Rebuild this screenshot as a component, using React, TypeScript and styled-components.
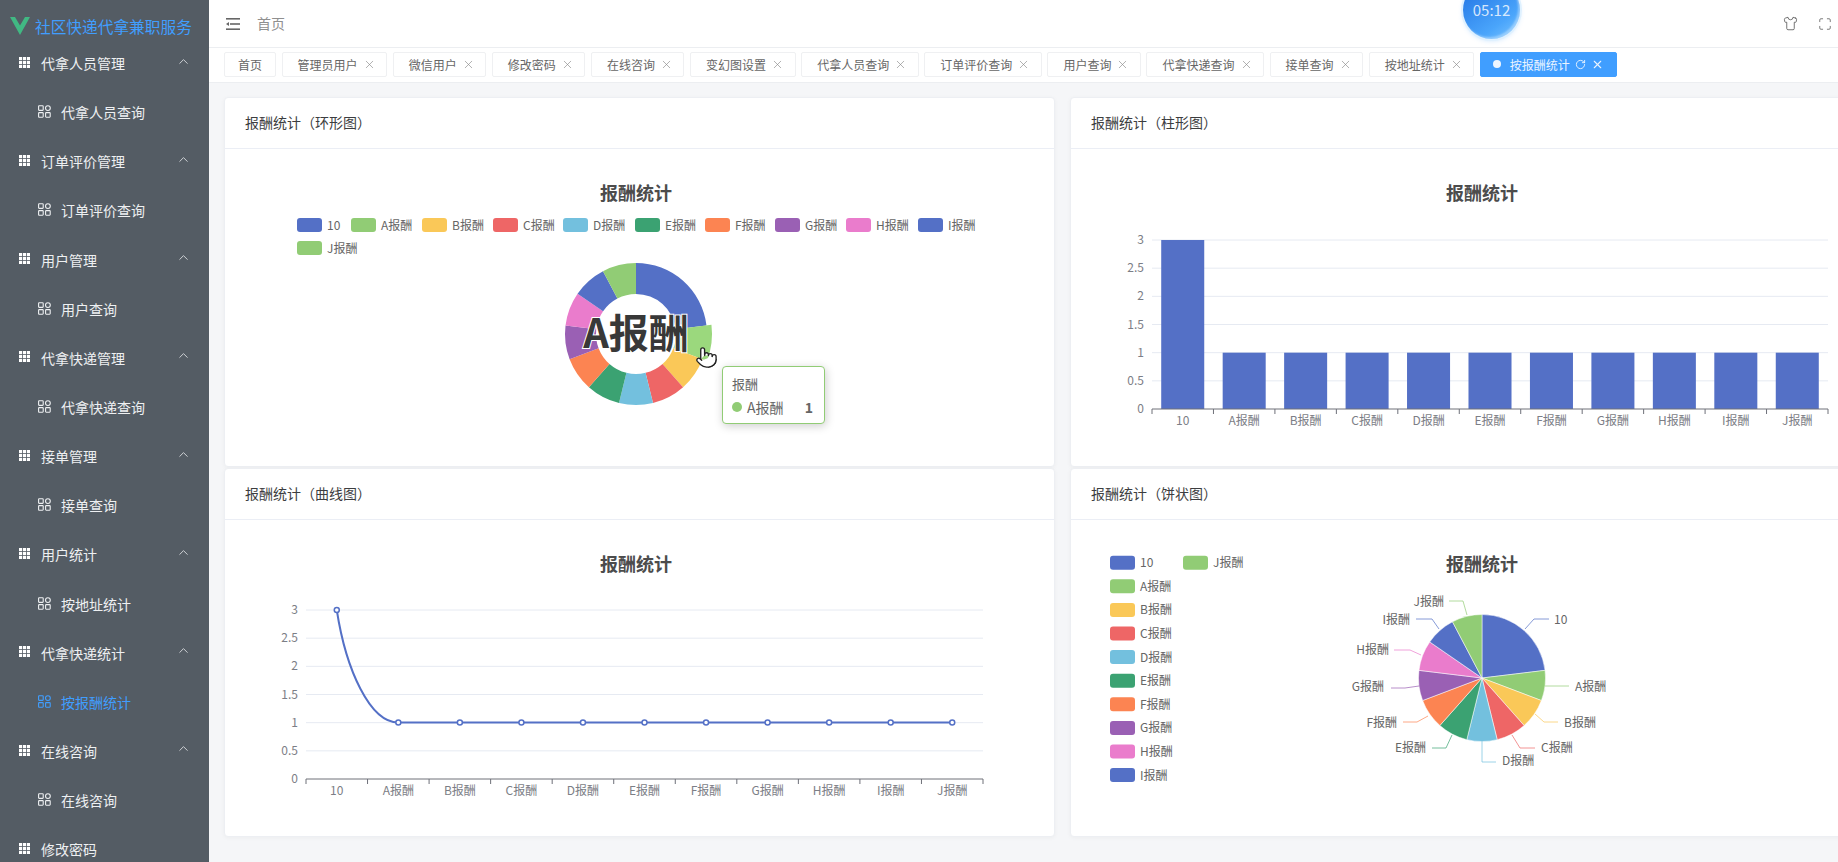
import React from "react";
import styled, { createGlobalStyle } from "styled-components";
import { ChevronUp, Maximize, Pointer, RotateCw, Shirt, X } from "lucide-react";

const COLORS = ["#5470c6", "#91cc75", "#fac858", "#ee6666", "#73c0de", "#3ba272", "#fc8452", "#9a60b4", "#ea7ccc", "#5470c6", "#91cc75"];
const NAMES = ["10", "A报酬", "B报酬", "C报酬", "D报酬", "E报酬", "F报酬", "G报酬", "H报酬", "I报酬", "J报酬"];
const VALUES = [3, 1, 1, 1, 1, 1, 1, 1, 1, 1, 1];
const TOTAL = VALUES.reduce((sum, v) => sum + v, 0);

const MENU = [
  { title: "代拿人员管理", child: "代拿人员查询" },
  { title: "订单评价管理", child: "订单评价查询" },
  { title: "用户管理", child: "用户查询" },
  { title: "代拿快递管理", child: "代拿快递查询" },
  { title: "接单管理", child: "接单查询" },
  { title: "用户统计", child: "按地址统计" },
  { title: "代拿快递统计", child: "按报酬统计", active: true },
  { title: "在线咨询", child: "在线咨询" },
  { title: "修改密码" },
];

const TAGS = ["管理员用户", "微信用户", "修改密码", "在线咨询", "变幻图设置", "代拿人员查询", "订单评价查询", "用户查询", "代拿快递查询", "接单查询", "按地址统计"];

// legend positions of the donut chart, the last one wraps to a second row
const DONUT_LEGEND = [297, 351, 422, 493, 563, 635, 705, 775, 846, 918, 297];

const PIE_LABELS = [
  { x: 1554, y: 619, anchor: "start", line: "1525,629 1534,619 1549,619" },
  { x: 1575, y: 686, anchor: "start", line: "1545,686 1556,686 1569,686" },
  { x: 1564, y: 722, anchor: "start", line: "1535,714 1544,722 1558,722" },
  { x: 1541, y: 747, anchor: "start", line: "1512,735 1520,748 1535,748" },
  { x: 1502, y: 760, anchor: "start", line: "1482,741 1482,762 1496,762" },
  { x: 1426, y: 747, anchor: "end", line: "1452,735 1446,748 1432,748" },
  { x: 1397, y: 722, anchor: "end", line: "1428,716 1417,722 1403,722" },
  { x: 1384, y: 686, anchor: "end", line: "1419,686 1405,688 1391,688" },
  { x: 1389, y: 649, anchor: "end", line: "1421,655 1410,650 1394,650" },
  { x: 1410, y: 619, anchor: "end", line: "1439,629 1432,619 1416,619" },
  { x: 1444, y: 601, anchor: "end", line: "1467,615 1463,601 1449,601" },
];

const polar = (cx: number, cy: number, r: number, deg: number) => {
  const rad = ((deg - 90) * Math.PI) / 180;
  return `${(cx + r * Math.cos(rad)).toFixed(2)} ${(cy + r * Math.sin(rad)).toFixed(2)}`;
};

const slicePath = (cx: number, cy: number, inner: number, outer: number, from: number, to: number) => {
  const large = to - from > 180 ? 1 : 0;
  const head = `M${polar(cx, cy, outer, from)} A${outer} ${outer} 0 ${large} 1 ${polar(cx, cy, outer, to)}`;
  if (inner === 0) return `${head} L${cx} ${cy} Z`;
  return `${head} L${polar(cx, cy, inner, to)} A${inner} ${inner} 0 ${large} 0 ${polar(cx, cy, inner, from)} Z`;
};

const sliceAngles = () => {
  let start = 0;
  return VALUES.map((v) => {
    const from = start;
    start += (v / TOTAL) * 360;
    return [from, start];
  });
};

const GridIcon = () => (
  <MenuGlyph width="11" height="11" viewBox="0 0 11 11" fill="#fff">
    {[0, 4, 8].map((y) =>
      [0, 4, 8].map((x) => <rect key={`${x}-${y}`} x={x} y={y} width="3.2" height="3.2" />)
    )}
  </MenuGlyph>
);

const AppsIcon = () => (
  <SubGlyph width="13" height="13" viewBox="0 0 13 13" fill="none" stroke="currentColor" strokeWidth="1.1">
    <rect x="0.6" y="0.8" width="4.6" height="4.6" rx="0.6" />
    <rect x="0.6" y="7.6" width="4.6" height="4.6" rx="0.6" />
    <rect x="7.6" y="7.6" width="4.6" height="4.6" rx="0.6" />
    <circle cx="9.9" cy="3.1" r="2.4" />
  </SubGlyph>
);

const FoldIcon = () => (
  <svg width="14" height="12" viewBox="0 0 14 12" fill="#666">
    <rect x="0" y="0" width="14" height="1.6" />
    <rect x="4" y="5.2" width="10" height="1.6" />
    <polygon points="0,6 3,4 3,8" />
    <rect x="0" y="10.4" width="14" height="1.6" />
  </svg>
);

const ChartHeading = ({ x, y }: { x: number; y: number }) => (
  <ChartTitle x={x} y={y} textAnchor="middle" dominantBaseline="central">
    报酬统计
  </ChartTitle>
);

const LegendItem = ({ x, y, index }: { x: number; y: number; index: number }) => (
  <g>
    <rect x={x} y={y - 7} width="25" height="14" rx="3" fill={COLORS[index]} />
    <LegendText x={x + 30} y={y} dominantBaseline="central">
      {NAMES[index]}
    </LegendText>
  </g>
);

const YAxisGrid = ({ left, right, labelX, top }: { left: number; right: number; labelX: number; top: number }) => (
  <g>
    {["3", "2.5", "2", "1.5", "1", "0.5", "0"].map((label, i) => {
      const y = top + i * 28.17;
      return (
        <g key={label}>
          {label !== "0" && <line x1={left} x2={right} y1={y} y2={y} stroke="#e6eaf2" />}
          <AxisText x={labelX} y={y} textAnchor="end" dominantBaseline="central">
            {label}
          </AxisText>
        </g>
      );
    })}
  </g>
);

const XAxis = ({ left, right, y }: { left: number; right: number; y: number }) => {
  const band = (right - left) / NAMES.length;
  return (
    <g>
      <line x1={left} x2={right} y1={y} y2={y} stroke="#6e7079" />
      {[...NAMES, ""].map((name, i) => (
        <g key={i}>
          <line x1={left + i * band} x2={left + i * band} y1={y} y2={y + 5} stroke="#6e7079" />
          {name && (
            <AxisText x={left + (i + 0.5) * band} y={y + 12} textAnchor="middle" dominantBaseline="central">
              {name}
            </AxisText>
          )}
        </g>
      ))}
    </g>
  );
};

const DonutChart = () => (
  <ChartSvg width="830" height="318" viewBox="224 149 830 318">
    <ChartHeading x={636} y={193} />
    {NAMES.map((_, i) => (
      <LegendItem key={i} x={DONUT_LEGEND[i]} y={i === 10 ? 248 : 225} index={i} />
    ))}
    {sliceAngles().map(([from, to], i) => (
      <path key={i} d={slicePath(636, 334, 40, i === 1 ? 76 : 71, from, to)} fill={i === 1 ? "#9bd87d" : COLORS[i]} />
    ))}
    <DonutLabel x={636} y={331} textAnchor="middle" dominantBaseline="central">
      A报酬
    </DonutLabel>
  </ChartSvg>
);

const BarChart = () => {
  const left = 1152;
  const band = (1828 - left) / NAMES.length;
  return (
    <ChartSvg width="830" height="318" viewBox="1070 149 830 318">
      <ChartHeading x={1482} y={193} />
      <YAxisGrid left={left} right={1828} labelX={1144} top={240} />
      {VALUES.map((v, i) => (
        <rect
          key={i}
          x={left + i * band + band * 0.15}
          y={409 - v * 56.33}
          width={band * 0.7}
          height={v * 56.33}
          fill={COLORS[0]}
        />
      ))}
      <XAxis left={left} right={1828} y={409} />
    </ChartSvg>
  );
};

const LineChart = () => {
  const left = 306;
  const band = (983 - left) / NAMES.length;
  const baseY = 722.6;
  const pointX = (i: number) => left + (i + 0.5) * band;
  return (
    <ChartSvg width="830" height="318" viewBox="224 520 830 318">
      <ChartHeading x={636} y={564} />
      <YAxisGrid left={left} right={983} labelX={298} top={610} />
      <XAxis left={left} right={983} y={779} />
      <path
        d={`M${pointX(0)} 610 C346 670 370 ${baseY} ${pointX(1)} ${baseY} L${pointX(10)} ${baseY}`}
        fill="none"
        stroke={COLORS[0]}
        strokeWidth="2"
      />
      {VALUES.map((v, i) => (
        <circle
          key={i}
          cx={pointX(i)}
          cy={v === 3 ? 610 : baseY}
          r="2.5"
          fill="#fff"
          stroke={COLORS[0]}
          strokeWidth="1.5"
        />
      ))}
    </ChartSvg>
  );
};

const PieChart = () => (
  <ChartSvg width="830" height="318" viewBox="1070 520 830 318">
    <ChartHeading x={1482} y={564} />
    {NAMES.slice(0, 10).map((_, i) => (
      <LegendItem key={i} x={1110} y={562.7 + i * 23.6} index={i} />
    ))}
    <LegendItem x={1183} y={562.7} index={10} />
    {sliceAngles().map(([from, to], i) => (
      <path key={i} d={slicePath(1482, 678, 0, 63.5, from, to)} fill={COLORS[i]} stroke="#fff" strokeWidth="0.5" />
    ))}
    {PIE_LABELS.map((label, i) => (
      <g key={i}>
        <polyline points={label.line} fill="none" stroke={COLORS[i]} strokeWidth="1" opacity="0.7" />
        <LegendText x={label.x} y={label.y} textAnchor={label.anchor as "start" | "end"} dominantBaseline="central">
          {NAMES[i]}
        </LegendText>
      </g>
    ))}
  </ChartSvg>
);

export default function App() {
  return (
    <Layout>
      <GlobalStyle />
      <Sidebar>
        <Logo>
          <svg width="20" height="18" viewBox="0 0 20 18">
            <polygon points="0,0 5,0 10,8.5 15,0 20,0 10,18" fill="#41b883" />
          </svg>
          <LogoText>社区快递代拿兼职服务</LogoText>
        </Logo>
        {MENU.map((item) => (
          <React.Fragment key={item.title}>
            <MenuRow>
              <GridIcon />
              <MenuLabel>{item.title}</MenuLabel>
              {item.child && (
                <Chevron>
                  <ChevronUp size={15} strokeWidth={1.5} />
                </Chevron>
              )}
            </MenuRow>
            {item.child && (
              <SubRow $active={item.active}>
                <AppsIcon />
                <SubLabel>{item.child}</SubLabel>
              </SubRow>
            )}
          </React.Fragment>
        ))}
      </Sidebar>
      <Main>
        <TopBar>
          <FoldIcon />
          <Crumb>首页</Crumb>
          <TopIcons>
            <Shirt size={15} strokeWidth={1.3} />
            <Maximize size={14} strokeWidth={1.3} />
          </TopIcons>
          <Timer>05:12</Timer>
        </TopBar>
        <TagBar>
          <Tag>首页</Tag>
          {TAGS.map((tag) => (
            <Tag key={tag} $closable>
              {tag}
              <X size={13} strokeWidth={1.2} />
            </Tag>
          ))}
          <ActiveTag>
            <TagDot />
            按报酬统计
            <RotateCw size={11} strokeWidth={2} />
            <X size={13} strokeWidth={2} />
          </ActiveTag>
        </TagBar>
        <Content>
          <Card>
            <CardHeader>报酬统计（环形图）</CardHeader>
            <DonutChart />
            <Tooltip>
              <TooltipTitle>报酬</TooltipTitle>
              <TooltipRow>
                <TooltipDot />
                A报酬
                <TooltipValue>1</TooltipValue>
              </TooltipRow>
            </Tooltip>
            <HandCursor>
              <Pointer size={23} strokeWidth={1.4} fill="#fff" color="#222" />
            </HandCursor>
          </Card>
          <Card>
            <CardHeader>报酬统计（柱形图）</CardHeader>
            <BarChart />
          </Card>
          <Card>
            <CardHeader>报酬统计（曲线图）</CardHeader>
            <LineChart />
          </Card>
          <Card>
            <CardHeader>报酬统计（饼状图）</CardHeader>
            <PieChart />
          </Card>
        </Content>
      </Main>
    </Layout>
  );
}

const GlobalStyle = createGlobalStyle`
  html, body {
    margin: 0;
    height: 100%;
    overflow: hidden;
  }
  * {
    box-sizing: border-box;
  }
  body {
    font-family: "Noto Sans CJK SC", "Liberation Sans", sans-serif;
  }
`;

const Layout = styled.div`
  display: flex;
  width: 1838px;
  height: 862px;
  overflow: hidden;
  background-color: #f5f6f8;
`;

const Sidebar = styled.aside`
  flex: 0 0 209px;
  height: 862px;
  overflow: hidden;
  background-color: #545c64;
  color: #eef0f2;
  font-size: 14px;
`;

const Logo = styled.div`
  display: flex;
  align-items: center;
  gap: 5px;
  height: 38.5px;
  padding: 14px 0 0 10px;
`;

const LogoText = styled.span`
  font-size: 15.7px;
  color: #409eff;
  white-space: nowrap;
`;

const MenuRow = styled.div`
  position: relative;
  display: flex;
  align-items: center;
  height: 49.15px;
  padding-left: 19px;
`;

const SubRow = styled.div<{ $active?: boolean }>`
  display: flex;
  align-items: center;
  height: 49.15px;
  padding-left: 38px;
  color: ${(props) => (props.$active ? "#409eff" : "#eef0f2")};
`;

const MenuGlyph = styled.svg`
  flex: none;
  margin-top: -2px;
`;

const SubGlyph = styled.svg`
  flex: none;
  margin-top: -1px;
`;

const MenuLabel = styled.span`
  margin-left: 11px;
  line-height: 20px;
  white-space: nowrap;
`;

const SubLabel = styled(MenuLabel)`
  margin-left: 10px;
`;

const Chevron = styled.span`
  position: absolute;
  right: 18px;
  top: 15px;
  display: flex;
  color: #d5d8db;
`;

const Main = styled.main`
  flex: 1;
  min-width: 0;
  display: flex;
  flex-direction: column;
`;

const TopBar = styled.header`
  position: relative;
  display: flex;
  align-items: center;
  flex: 0 0 48px;
  padding: 0 6px 0 17px;
  background-color: #fff;
  border-bottom: 1px solid #eceef1;
`;

const Crumb = styled.span`
  margin: -2px 0 0 17px;
  font-size: 14px;
  color: #8f8f8f;
`;

const TopIcons = styled.div`
  display: flex;
  align-items: center;
  gap: 20px;
  margin-left: auto;
  color: #555;
`;

const Timer = styled.div`
  position: absolute;
  left: 1254px;
  top: -19px;
  display: flex;
  align-items: flex-end;
  justify-content: center;
  width: 57px;
  height: 58px;
  padding-bottom: 21px;
  border-radius: 50%;
  background: linear-gradient(145deg, #2b7fe9 20%, #4aa5fb 70%, #7cc6ff 100%);
  box-shadow: 0 0 0 2px #dff1ff, 0 2px 5px rgba(64, 158, 255, 0.25), inset -2px -2px 2px rgba(255, 255, 255, 0.35);
  font-size: 15px;
  line-height: 16px;
  color: rgba(255, 255, 255, 0.8);
`;

const TagBar = styled.nav`
  display: flex;
  align-items: center;
  flex: 0 0 34.5px;
  gap: 5.6px;
  padding-left: 15px;
  background-color: #fff;
  border-bottom: 1px solid #eceef1;
`;

const Tag = styled.div<{ $closable?: boolean }>`
  display: flex;
  align-items: center;
  gap: 5px;
  height: 25px;
  padding: ${(props) => (props.$closable ? "0 10.5px 1.5px 15px" : "0 13px 1.5px")};
  background-color: #fff;
  border: 1px solid #eff0f2;
  border-radius: 2px;
  font-size: 12px;
  color: #666;
  white-space: nowrap;

  svg {
    color: #888;
  }
`;

const ActiveTag = styled(Tag)`
  padding: 0 12px 1.5px 12px;
  background-color: #409eff;
  border-color: #409eff;
  color: #eaf4ff;

  svg {
    color: #eaf4ff;
  }
`;

const TagDot = styled.span`
  width: 8px;
  height: 8px;
  margin-right: 4px;
  border-radius: 50%;
  background-color: #eef6ff;
`;

const Content = styled.section`
  display: grid;
  grid-template-columns: 831px 829px;
  grid-template-rows: 369.5px 368.5px;
  gap: 1.5px 15px;
  padding: 14.5px 0 0 15px;
`;

const Card = styled.article`
  position: relative;
  background-color: #fff;
  border: 1px solid #edeff3;
  border-radius: 4px;
  box-shadow: 0 1px 4px rgba(0, 0, 0, 0.04);
`;

const CardHeader = styled.div`
  display: flex;
  align-items: center;
  height: 51px;
  padding: 0 0 2px 20px;
  border-bottom: 1px solid #ebeef5;
  font-size: 14px;
  color: #3c3d40;
`;

const ChartSvg = styled.svg`
  display: block;
  margin-left: -1px;
`;

const ChartTitle = styled.text`
  font-size: 18px;
  font-weight: 700;
  fill: #4c4c4c;
  transform: translateY(-1px);
`;

const LegendText = styled.text`
  font-size: 12px;
  fill: #666;
  transform: translateY(-1px);
`;

const AxisText = styled.text`
  font-size: 12px;
  fill: #7c7e86;
  transform: translateY(-1.5px);
`;

const DonutLabel = styled.text`
  font-size: 40px;
  font-weight: 700;
  fill: #383838;
  stroke: #fff;
  stroke-width: 2px;
  paint-order: stroke;
`;

const Tooltip = styled.div`
  position: absolute;
  left: 497px;
  top: 268px;
  width: 103px;
  height: 58px;
  padding: 7px 9px;
  background-color: #fff;
  border: 1px solid #91cc75;
  border-radius: 4px;
  box-shadow: 1px 2px 10px rgba(0, 0, 0, 0.2);
  font-size: 14px;
  line-height: 20px;
  color: #666;
`;

const TooltipTitle = styled.div`
  margin-bottom: 3px;
  font-size: 13px;
`;

const TooltipRow = styled.div`
  display: flex;
  align-items: center;
  gap: 5px;
`;

const TooltipDot = styled.span`
  width: 10px;
  height: 10px;
  border-radius: 50%;
  background-color: #91cc75;
`;

const TooltipValue = styled.span`
  margin: 0 2px 0 auto;
  font-size: 14px;
  font-weight: 700;
`;

const HandCursor = styled.div`
  position: absolute;
  left: 470px;
  top: 248px;
  display: flex;
`;
